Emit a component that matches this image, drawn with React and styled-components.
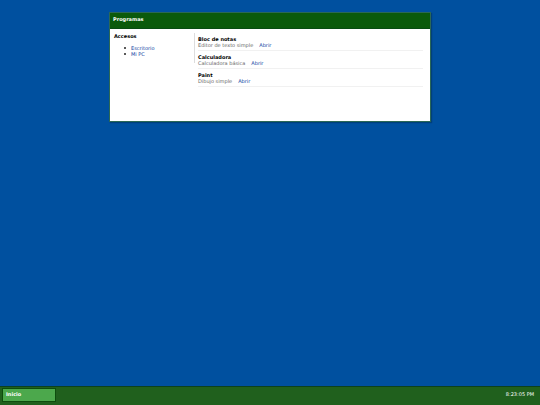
import React from "react";
import styled, { createGlobalStyle } from "styled-components";

const GlobalStyle = createGlobalStyle`
  * { box-sizing: border-box; }
  body {
    margin: 0;
    background: #00509f;
    color: #000;
    font: 5px/6px "DejaVu Sans", sans-serif;
  }
`;

const Desktop = styled.div`
  display: flex;
  flex-direction: column;
  min-height: 100vh;
`;

const Workspace = styled.main`
  flex: 1;
  padding: 12px 8px;
`;

const Window = styled.section`
  width: 100%;
  max-width: 322px;
  min-height: 110px;
  margin: 0 auto;
  background: #fff;
  border: 1px solid #2b6855;
  box-shadow: 1px 1px 1px rgba(0, 40, 70, 0.4);
`;

const TitleBar = styled.header`
  padding: 3px 3px 6px;
  background: #0b5a0b;
  border-bottom: 1px solid #084c12;
  color: #fff;
`;

const Title = styled.h1`
  margin: 0;
  font-size: 5px;
  line-height: 6px;
`;

const Body = styled.div`
  display: grid;
  grid-template-columns: 81px 1fr;
  gap: 3px;
  padding: 4px;
`;

const Sidebar = styled.nav`
  align-self: start;
  padding-bottom: 6px;
  border-right: 1px solid #ddd;
`;

const Heading = styled.h2`
  margin: 0;
  font-size: 5px;
  line-height: 6px;
`;

const LinkList = styled.ul`
  margin: 6px 0 0;
  padding-left: 10px;
  list-style: none;
`;

const Place = styled.li`
  display: flex;
  align-items: center;
  gap: 5px;

  &::before {
    content: "";
    width: 2px;
    height: 2px;
    border-radius: 50%;
    background: #222;
  }
`;

const Link = styled.a`
  color: #0b41a0;
  text-decoration: none;
`;

const Programs = styled.div`
  padding-right: 3px;
`;

const Program = styled.article`
  padding: 3px 0 2px;
  border-bottom: 1px solid #f1f1f1;
`;

const Name = styled.h3`
  margin: 0;
  font-size: 5px;
  line-height: 6px;
`;

const Details = styled.div`
  display: flex;
  gap: 6px;
  color: #666;
`;

const Taskbar = styled.footer`
  display: flex;
  align-items: flex-start;
  justify-content: space-between;
  padding: 1px 6px 3px 2px;
  background: #20601d;
  border-top: 1px solid #0c421d;
  color: #fff;
`;

const StartButton = styled.button`
  width: 54px;
  height: 14px;
  padding: 0 3px 3px;
  background: #4ca84c;
  border: 1px solid #0d4d0d;
  color: #fff;
  font: bold 5px/6px "DejaVu Sans", sans-serif;
  text-align: left;
`;

const Clock = styled.time`
  padding-top: 3px;
`;

const places = ["Escritorio", "Mi PC"];
const programs = [
  ["Bloc de notas", "Editor de texto simple"],
  ["Calculadora", "Calculadora básica"],
  ["Paint", "Dibujo simple"],
];

export default function App() {
  return (
    <Desktop>
      <GlobalStyle />
      <Workspace>
        <Window aria-label="Programas">
          <TitleBar><Title>Programas</Title></TitleBar>
          <Body>
            <Sidebar aria-label="Accesos">
              <Heading>Accesos</Heading>
              <LinkList>
                {places.map((place) => (
                  <Place key={place}><Link href="#">{place}</Link></Place>
                ))}
              </LinkList>
            </Sidebar>
            <Programs>
              {programs.map(([name, description]) => (
                <Program key={name}>
                  <Name>{name}</Name>
                  <Details>
                    <span>{description}</span>
                    <Link href="#" aria-label={`Abrir ${name}`}>Abrir</Link>
                  </Details>
                </Program>
              ))}
            </Programs>
          </Body>
        </Window>
      </Workspace>
      <Taskbar>
        <StartButton type="button">Inicio</StartButton>
        <Clock>8:23:05 PM</Clock>
      </Taskbar>
    </Desktop>
  );
}
